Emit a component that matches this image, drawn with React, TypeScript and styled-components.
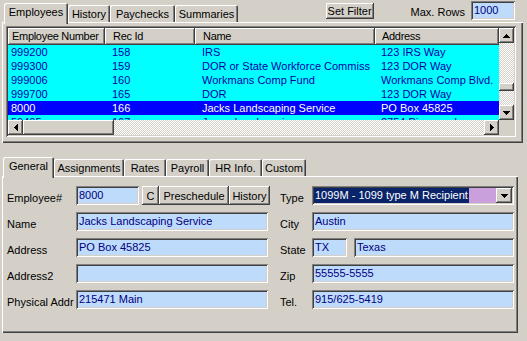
import React from 'react';
import styled, { createGlobalStyle, css } from 'styled-components';

const GlobalStyle = createGlobalStyle`
  html, body { margin: 0; padding: 0; background: #d4d0c8; }
  body { font-family: "Liberation Sans", Arial, sans-serif; font-size: 11px; color: #000; }
  * { box-sizing: border-box; }
`;

const raised = css`
  box-shadow: inset -1px -1px #404040, inset 1px 1px #fff, inset -2px -2px #808080, inset 2px 2px #d4d0c8;
`;
const sunken = css`
  box-shadow: inset 1px 1px #808080, inset -1px -1px #fff, inset 2px 2px #404040, inset -2px -2px #d4d0c8;
`;
const checker = css`
  background-color: #fff;
  background-image: repeating-conic-gradient(#d4d0c8 0% 25%, #fff 0% 50%);
  background-size: 2px 2px;
`;

const Window = styled.div`
  width: 527px;
  height: 341px;
  display: flex;
  flex-direction: column;
  background: #d4d0c8;
  overflow: hidden;
`;

const TopRow = styled.div`
  display: flex;
  height: 22px;
  align-items: flex-end;
`;

const TabStrip = styled.div<{ $offset: number; $height: number }>`
  display: flex;
  align-items: flex-end;
  height: ${(p) => p.$height}px;
  margin-left: ${(p) => p.$offset}px;
`;

const Tab = styled.div<{ $w: number; $active?: boolean; $tall: number }>`
  position: relative;
  z-index: ${(p) => (p.$active ? 2 : 0)};
  width: ${(p) => p.$w}px;
  height: ${(p) => (p.$active ? p.$tall : 17)}px;
  margin-bottom: ${(p) => (p.$active ? -2 : 0)}px;
  padding-bottom: ${(p) => (p.$active ? 3 : 0)}px;
  display: flex;
  align-items: center;
  justify-content: center;
  white-space: nowrap;
  background: #d4d0c8;
  border-radius: 2px 2px 0 0;
  box-shadow: inset 1px 1px #fff, inset -1px 0 #404040, inset -2px 0 #808080;
`;

const Controls = styled.div`
  margin-left: auto;
  margin-right: 12px;
  align-self: flex-start;
  margin-top: 1px;
  display: flex;
  align-items: center;
  height: 19px;
`;

const Button = styled.div<{ $w: number; $gap?: number }>`
  ${raised};
  width: ${(p) => p.$w}px;
  margin-left: ${(p) => p.$gap ?? 0}px;
  height: 19px;
  display: flex;
  align-items: center;
  justify-content: center;
  white-space: nowrap;
  flex-shrink: 0;
  background: #d4d0c8;
`;

const SmallButton = styled(Button)`
  height: 16px;
`;

const MaxLabel = styled.span`
  margin-left: 37px;
  margin-right: 6px;
  padding-top: 2px;
`;

const Field = styled.div<{ $w?: number }>`
  ${sunken};
  ${(p) => (p.$w ? `width: ${p.$w}px; flex-shrink: 0;` : 'flex: 1;')}
  height: 19px;
  line-height: 19px;
  padding: 0 3px;
  background: #bfdbfb;
  color: #000080;
  white-space: nowrap;
  overflow: hidden;
`;

const Panel = styled.div<{ $w: number; $h: number }>`
  margin-left: 2px;
  width: ${(p) => p.$w}px;
  height: ${(p) => p.$h}px;
  background: #d4d0c8;
  box-shadow: inset 1px 1px #fff, inset -1px -1px #404040, inset -2px -2px #808080;
`;

const TopPanel = styled(Panel)`
  padding: 4px 0 0 4px;
`;

const Grid = styled.div`
  ${sunken};
  width: 510px;
  height: 111px;
  padding: 2px;
  display: grid;
  grid-template-columns: 1fr 15px;
  grid-template-rows: 1fr 15px;
  background: #d4d0c8;
`;

const GridBody = styled.div`
  overflow: hidden;
  background: #00ffff;
`;

const HeaderRow = styled.div`
  display: flex;
  height: 17px;
  background: #d4d0c8;
`;

const HeaderCell = styled.div<{ $w: number; $pad: number }>`
  ${raised};
  width: ${(p) => p.$w}px;
  flex-shrink: 0;
  padding-left: ${(p) => p.$pad + 1}px;
  line-height: 17px;
  letter-spacing: -0.3px;
  white-space: nowrap;
  overflow: hidden;
`;

const DataRow = styled.div<{ $selected?: boolean }>`
  display: flex;
  height: 14px;
  line-height: 14px;
  background: ${(p) => (p.$selected ? '#0000ff' : '#00ffff')};
  color: ${(p) => (p.$selected ? '#ffffff' : '#0000a8')};
`;

const DataCell = styled.div<{ $w: number; $pad: number }>`
  width: ${(p) => p.$w}px;
  flex-shrink: 0;
  padding-left: ${(p) => p.$pad}px;
  white-space: nowrap;
  overflow: hidden;
`;

const VScroll = styled.div`
  display: flex;
  flex-direction: column;
`;

const HScroll = styled.div`
  display: flex;
`;

const ScrollButton = styled.div`
  ${raised};
  width: 15px;
  height: 15px;
  flex-shrink: 0;
  display: flex;
  align-items: center;
  justify-content: center;
  background: #d4d0c8;
`;

const VTrack = styled.div`
  ${checker};
  flex: 1;
  display: flex;
  flex-direction: column;
`;

const HTrack = styled.div`
  ${checker};
  flex: 1;
  display: flex;
`;

const VThumb = styled.div<{ $offset: number }>`
  ${raised};
  margin-top: ${(p) => p.$offset}px;
  height: 8px;
  background: #d4d0c8;
`;

const HThumb = styled.div<{ $size: number }>`
  ${raised};
  width: ${(p) => p.$size}px;
  background: #d4d0c8;
`;

const Corner = styled.div`
  background: #d4d0c8;
`;

const BottomStrip = styled.div`
  margin-top: 12px;
  height: 21px;
  display: flex;
  align-items: flex-end;
`;

const BottomPanel = styled(Panel)`
  padding: 10px 0 0 5px;
`;

const Form = styled.div`
  display: grid;
  grid-template-columns: 69px 192px 44px 202px;
  grid-auto-rows: 19px;
  row-gap: 7px;
`;

const Label = styled.div<{ $indent?: number }>`
  padding-left: ${(p) => p.$indent ?? 0}px;
  padding-top: 4px;
  line-height: 16px;
  white-space: nowrap;
`;

const FieldRow = styled.div<{ $gap?: number }>`
  display: flex;
  gap: ${(p) => p.$gap ?? 0}px;
  min-width: 0;
`;

const Select = styled.div`
  ${sunken};
  display: flex;
  align-items: stretch;
  height: 19px;
  padding: 2px;
  background: #c9a0dc;
`;

const SelectedText = styled.div`
  background: #0a246a;
  color: #fff;
  padding: 0 1px;
  line-height: 15px;
  white-space: nowrap;
`;

const SelectFill = styled.div`
  flex: 1;
`;

const DropButton = styled(ScrollButton)`
  width: 16px;
`;

type Dir = 'up' | 'down' | 'left' | 'right';
const arrowPaths: Record<Dir, string> = {
  up: 'M3 0h1v1h-1z M2 1h3v1h-3z M1 2h5v1h-5z M0 3h7v1h-7z',
  down: 'M0 0h7v1h-7z M1 1h5v1h-5z M2 2h3v1h-3z M3 3h1v1h-1z',
  left: 'M3 0h1v7h-1z M2 1h1v5h-1z M1 2h1v3h-1z M0 3h1v1h-1z',
  right: 'M0 0h1v7h-1z M1 1h1v5h-1z M2 2h1v3h-1z M3 3h1v1h-1z',
};
const Arrow = ({ dir }: { dir: Dir }) => {
  const horiz = dir === 'left' || dir === 'right';
  const w = horiz ? 4 : 7;
  const h = horiz ? 7 : 4;
  return (
    <svg width={w} height={h} viewBox={`0 0 ${w} ${h}`} shapeRendering="crispEdges">
      <path d={arrowPaths[dir]} fill="#000" />
    </svg>
  );
};

const columns = [
  { title: 'Employee Number', w: 97, pad: 3 },
  { title: 'Rec Id', w: 90, pad: 7 },
  { title: 'Name', w: 180, pad: 7 },
  { title: 'Address', w: 124, pad: 6 },
];

const rows = [
  { cells: ['999200', '158', 'IRS', '123 IRS Way'] },
  { cells: ['999300', '159', 'DOR or State Workforce Commiss', '123 DOR Way'] },
  { cells: ['999006', '160', 'Workmans Comp Fund', 'Workmans Comp Blvd.'] },
  { cells: ['999700', '165', 'DOR', '123 DOR Way'] },
  { cells: ['8000', '166', 'Jacks Landscaping Service', 'PO Box 45825'], selected: true },
  { cells: ['59405', '167', 'Jones Landscaping', '2754 Pinewood'] },
];

const topTabs = [
  { label: 'Employees', w: 64, active: true },
  { label: 'History', w: 42 },
  { label: 'Paychecks', w: 65 },
  { label: 'Summaries', w: 63 },
];

const bottomTabs = [
  { label: 'General', w: 51, active: true },
  { label: 'Assignments', w: 70 },
  { label: 'Rates', w: 42 },
  { label: 'Payroll', w: 43 },
  { label: 'HR Info.', w: 53 },
  { label: 'Custom', w: 44 },
];

export default function App() {
  return (
    <Window>
      <GlobalStyle />
      <TopRow>
        <TabStrip $offset={4} $height={22}>
          {topTabs.map((t) => (
            <Tab key={t.label} $w={t.w} $active={t.active} $tall={21}>
              {t.label}
            </Tab>
          ))}
        </TabStrip>
        <Controls>
          <SmallButton $w={48}>Set Filter</SmallButton>
          <MaxLabel>Max. Rows</MaxLabel>
          <Field $w={44}>1000</Field>
        </Controls>
      </TopRow>
      <TopPanel $w={521} $h={121}>
        <Grid>
          <GridBody>
            <HeaderRow>
              {columns.map((c) => (
                <HeaderCell key={c.title} $w={c.w} $pad={c.pad}>
                  {c.title}
                </HeaderCell>
              ))}
            </HeaderRow>
            {rows.map((r, i) => (
              <DataRow key={i} $selected={r.selected}>
                {r.cells.map((v, j) => (
                  <DataCell key={j} $w={columns[j].w} $pad={columns[j].pad}>
                    {v}
                  </DataCell>
                ))}
              </DataRow>
            ))}
          </GridBody>
          <VScroll>
            <ScrollButton>
              <Arrow dir="up" />
            </ScrollButton>
            <VTrack>
              <VThumb $offset={40} />
            </VTrack>
            <ScrollButton>
              <Arrow dir="down" />
            </ScrollButton>
          </VScroll>
          <HScroll>
            <ScrollButton>
              <Arrow dir="left" />
            </ScrollButton>
            <HThumb $size={91} />
            <HTrack />
            <ScrollButton>
              <Arrow dir="right" />
            </ScrollButton>
          </HScroll>
          <Corner />
        </Grid>
      </TopPanel>
      <BottomStrip>
        <TabStrip $offset={3} $height={21}>
          {bottomTabs.map((t) => (
            <Tab key={t.label} $w={t.w} $active={t.active} $tall={21}>
              {t.label}
            </Tab>
          ))}
        </TabStrip>
      </BottomStrip>
      <BottomPanel $w={516} $h={157}>
        <Form>
          <Label>Employee#</Label>
          <FieldRow>
            <Field $w={63}>8000</Field>
            <Button $w={17} $gap={3}>C</Button>
            <Button $w={70}>Preschedule</Button>
            <Button $w={41}>History</Button>
          </FieldRow>
          <Label $indent={12}>Type</Label>
          <Select>
            <SelectedText>1099M - 1099 type M Recipient</SelectedText>
            <SelectFill />
            <DropButton>
              <Arrow dir="down" />
            </DropButton>
          </Select>

          <Label>Name</Label>
          <Field>Jacks Landscaping Service</Field>
          <Label $indent={12}>City</Label>
          <Field>Austin</Field>

          <Label>Address</Label>
          <Field>PO Box 45825</Field>
          <Label $indent={12}>State</Label>
          <FieldRow $gap={7}>
            <Field $w={35}>TX</Field>
            <Field>Texas</Field>
          </FieldRow>

          <Label>Address2</Label>
          <Field />
          <Label $indent={12}>Zip</Label>
          <Field>55555-5555</Field>

          <Label>Physical Addr</Label>
          <Field>215471 Main</Field>
          <Label $indent={12}>Tel.</Label>
          <Field>915/625-5419</Field>
        </Form>
      </BottomPanel>
    </Window>
  );
}
